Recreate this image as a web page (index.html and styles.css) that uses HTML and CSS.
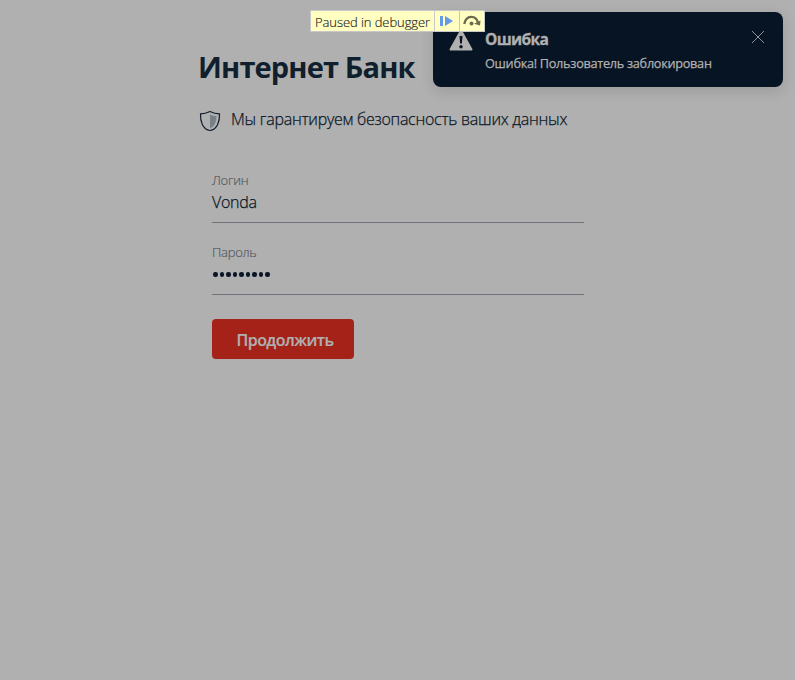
FILE: index.html
```html
<!DOCTYPE html>
<html lang="ru">
<head>
<meta charset="utf-8">
<title>Интернет Банк</title>
<link rel="stylesheet" href="styles.css">
</head>
<body>
<main class="login">
  <h1 class="title"><span>Интернет Банк</span></h1>
  <p class="guarantee">
    <svg class="shield" width="22" height="22" viewBox="0 0 22 22">
      <path d="M11 1.500C8 3 5 3.800 1.500 3.800C1.200 11 3.500 19.500 11 20.500C18.500 19.500 20.800 11 20.500 3.800C17 3.800 14 3 11 1.500Z" fill="none" stroke="#141f2e" stroke-width="1.200"/>
      <path d="M11 4.500C13 5.600 15 6 17.500 6.200C17.300 12 15.500 16.500 11 18.200Z" fill="#7a8087"/>
    </svg>
    <span class="guarantee-text">Мы гарантируем безопасность ваших данных</span>
  </p>
  <form class="form">
    <label class="field"><span class="label login-label">Логин</span><span class="value">Vonda</span></label>
    <label class="field"><span class="label password-label">Пароль</span><span class="value password"><i></i><i></i><i></i><i></i><i></i><i></i><i></i><i></i><i></i></span></label>
    <button class="submit" type="button"><span>Продолжить</span></button>
  </form>
</main>
<aside class="toast">
  <svg class="warning" width="24" height="22" viewBox="0 0 24 22">
    <path d="M12 1.500L22.500 20.500H1.500Z" fill="#b0b0b0" stroke="#b0b0b0" stroke-width="2" stroke-linejoin="round"/>
    <path d="M10.500 7H13.500L12.900 14.500H11.100Z" fill="#071424"/><circle cx="12" cy="17.800" r="1.700" fill="#071424"/>
  </svg>
  <div class="toast-body">
    <strong class="toast-title"><span>Ошибка</span></strong>
    <span class="toast-text">Ошибка! Пользователь заблокирован</span>
  </div>
  <svg class="close" width="14" height="14" viewBox="0 0 14 14"><path d="M1 1L13 13M13 1L1 13" stroke="#8c9197" stroke-width="1"/></svg>
</aside>
<div class="debugger">
  <span class="debug-label"><span>Paused in debugger</span></span>
  <span class="debug-button"><svg width="24" height="20" viewBox="0 0 24 20"><path d="M5 5H8V15H5ZM10 5L18 10L10 15Z" fill="#6699e8"/></svg></span>
  <span class="debug-button"><svg width="24" height="20" viewBox="0 0 24 20"><path d="M4.300 13C6 3.500 16 4 18 11.500" fill="none" stroke="#6b6b50" stroke-width="2.400"/><path d="M20.500 9.500L20 14.500L14 12.800Z" fill="#6b6b50"/><circle cx="11.500" cy="12.500" r="2" fill="#6b6b50"/></svg></span>
</div>
</body>
</html>
```
FILE: styles.css
```css
* { box-sizing: border-box; }
body {
  margin: 0;
  min-height: 680px;
  background: #b0b0b0;
  color: #0a1626;
  font-family: "Open Sans", "Noto Sans", sans-serif;
}
.login { width: 400px; margin-left: 198px; padding-top: 47px; }
.title { margin: 0; font-size: 29px; line-height: 40px; font-weight: 700; letter-spacing: -.85px; color: #101f2d; white-space: nowrap; }
.guarantee { display: flex; align-items: center; gap: 10px; height: 24px; margin: 21px 0 0 1px; padding-top: 1px; font-size: 16px; white-space: nowrap; }
.guarantee-text { line-height: 24px; margin-top: -3px; font-weight: 350; letter-spacing: -.26px; -webkit-text-stroke: .25px #0a1626; }
.form { padding: 39px 14px 0; }
.field { display: flex; flex-direction: column; width: 372px; height: 52px; margin-bottom: 20px; border-bottom: 1px solid #707379; }
.label { font-size: 13px; line-height: 18px; font-weight: 350; letter-spacing: -.25px; color: #50555c; -webkit-text-stroke: .15px #50555c; }
.value { font-size: 16px; line-height: 24px; margin-top: 1px; font-weight: 350; letter-spacing: -.3px; -webkit-text-stroke: .25px #0a1626; }
.password { display: flex; align-items: center; gap: 2px; height: 24px; padding: 1px 0 0 1px; }
.password i { width: 4.500px; height: 4.500px; border-radius: 50%; background: #0a1626; }
.submit { display: block; width: 142px; height: 40px; margin-top: 24px; padding: 0 0 0 4px; border: 0; border-radius: 4px; background: #a52219; color: #b0b0b0; font: 600 16px/42px "Open Sans", sans-serif; letter-spacing: -.55px; -webkit-text-stroke: .2px #b0b0b0; }
.toast { position: absolute; left: 433px; top: 12px; width: 350px; height: 75px; display: flex; padding: 17px 18px 0 16px; border-radius: 8px; background: #071424; color: #b0b0b0; box-shadow: 0 4px 14px rgba(0, 0, 0, .12); }
.toast-body { flex: 1; display: flex; flex-direction: column; margin-left: 12px; margin-top: -2px; }
.toast-title { font-size: 15.500px; line-height: 24px; letter-spacing: -.65px; -webkit-text-stroke: .3px #b0b0b0; }
.toast-text { font-size: 12.700px; line-height: 18px; margin-top: 3px; letter-spacing: -.28px; -webkit-text-stroke: .25px #b0b0b0; white-space: nowrap; }
.close { margin-top: 1px; }
.debugger { position: absolute; left: 310px; top: 10px; display: flex; width: 175px; height: 22px; border: 1px solid #c8c8c8; background: #ffffc2; color: #222; font-size: 13px; font-weight: 350; line-height: 22px; letter-spacing: -.08px; -webkit-text-stroke: .15px #222; white-space: nowrap; }
.debug-label { width: 123px; padding-left: 4px; }
.debug-button { width: 25px; height: 20px; border-left: 1px solid #c8c8c8; }
.debug-button svg { display: block; }
```
